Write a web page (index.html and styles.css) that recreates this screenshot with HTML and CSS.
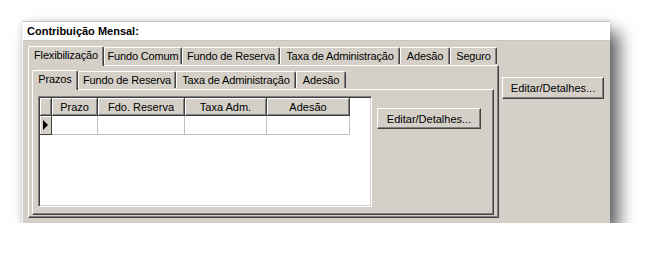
FILE: index.html
```html
<!DOCTYPE html>
<html lang="pt">
<head>
  <meta charset="UTF-8" />
  <title>Contribuição Mensal</title>
  <link rel="stylesheet" href="styles.css">
</head>
<body>

  <div class="window">
    <div class="title">Contribuição Mensal:</div>

    <div class="content">
      <!-- Abas principais -->
      <div class="tabs outer">
        <div class="tabbar">
          <span class="tab active t-flex">Flexibilização</span>
          <span class="tab t-comum">Fundo Comum</span>
          <span class="tab t-reserva">Fundo de Reserva</span>
          <span class="tab t-taxa">Taxa de Administração</span>
          <span class="tab t-adesao">Adesão</span>
          <span class="tab t-seguro">Seguro</span>
        </div>
        <div class="panel outer-panel">

          <!-- Abas internas -->
          <div class="tabs inner">
            <div class="tabbar">
              <span class="tab active t-prazos">Prazos</span>
              <span class="tab t-reserva">Fundo de Reserva</span>
              <span class="tab t-taxa">Taxa de Administração</span>
              <span class="tab t-adesao">Adesão</span>
            </div>
            <div class="panel inner-panel">
              <div class="grid">
                <table>
                  <thead>
                    <tr>
                      <th class="ind"></th>
                      <th class="c-prazo">Prazo</th>
                      <th class="c-fdo">Fdo. Reserva</th>
                      <th class="c-taxa">Taxa Adm.</th>
                      <th class="c-ades">Adesão</th>
                    </tr>
                  </thead>
                  <tbody>
                    <tr>
                      <td class="ind"><span class="arrow"></span></td>
                      <td></td>
                      <td></td>
                      <td></td>
                      <td></td>
                    </tr>
                  </tbody>
                </table>
              </div>
              <button class="btn btn-inner">Editar/Detalhes...</button>
            </div>
          </div>

        </div>
      </div>

      <div class="side">
        <button class="btn btn-side">Editar/Detalhes...</button>
      </div>
    </div>
  </div>

</body>
</html>
```

FILE: styles.css
```css
body {
  margin: 0;
  background-color: #fff;
  font-family: "Liberation Sans", Arial, sans-serif;
  font-size: 11px;
  color: #000;
}

.window {
  margin: 21px 0 0 22px;
  width: 588px;
  height: 202px;
  background-color: #d4d0c8;
  border-top: 1px solid #c8c6c0;
  border-left: 1px solid #f4f3ef;
  box-sizing: border-box;
  box-shadow: 0 0 6px rgba(0,0,0,0.12), 9px 11px 16px rgba(0,0,0,0.62);
}

.title {
  height: 18px;
  line-height: 19px;
  padding-left: 4px;
  background-color: #fff;
  border-bottom: 1px solid #c8c6c0;
  font-weight: bold;
}

.content {
  display: flex;
  padding: 5px 0 0 5px;
}

/* Abas */
.tabbar {
  display: flex;
  align-items: flex-end;
  height: 19px;
}

.tab {
  box-sizing: border-box;
  height: 17px;
  line-height: 16px;
  margin-bottom: 1px;
  text-align: center;
  letter-spacing: -0.15px;
  background-color: #d4d0c8;
  border-top: 1px solid #fff;
  border-left: 1px solid #fff;
  border-right: 1px solid #404040;
  border-radius: 2px 2px 0 0;
  box-shadow: inset -1px 0 #808080;
  white-space: nowrap;
}

.tab.active {
  height: 20px;
  line-height: 17px;
  margin-bottom: -1px;
  position: relative;
  z-index: 1;
}

.t-flex { width: 76px; }
.t-comum { width: 78px; }
.t-reserva { width: 98px; }
.t-taxa { width: 120px; }
.t-adesao { width: 50px; }
.t-seguro { width: 47px; }
.t-prazos { width: 46px; }

.panel {
  box-sizing: border-box;
  border-top: 1px solid #fff;
  border-left: 1px solid #fff;
  border-right: 1px solid #404040;
  border-bottom: 1px solid #404040;
  box-shadow: inset -1px -1px #808080;
  background-color: #d4d0c8;
}

.outer-panel {
  width: 471px;
  height: 153px;
  padding: 4px 0 0 3px;
}

.inner-panel {
  width: 462px;
  height: 126px;
  display: flex;
  align-items: flex-start;
  padding: 6px 0 0 5px;
}

/* Grade */
.grid {
  width: 334px;
  height: 111px;
  box-sizing: border-box;
  background-color: #fff;
  border-top: 1px solid #808080;
  border-left: 1px solid #808080;
  border-right: 1px solid #fff;
  border-bottom: 1px solid #fff;
  box-shadow: inset 1px 1px #404040, inset -1px -1px #d4d0c8;
  padding: 1px 0 0 1px;
}

table {
  border-collapse: separate;
  border-spacing: 0;
  table-layout: fixed;
}

th, td {
  box-sizing: border-box;
  padding: 0;
  font-weight: normal;
  text-align: center;
}

th {
  height: 18px;
  background-color: #d4d0c8;
  border-right: 1px solid #404040;
  border-bottom: 1px solid #404040;
  box-shadow: inset 1px 1px #fff, inset -1px -1px #808080;
}

td {
  height: 19px;
  border-right: 1px solid #c0c0c0;
  border-bottom: 1px solid #c0c0c0;
}

.ind { width: 12px; }
.c-prazo { width: 46px; }
.c-fdo { width: 87px; }
.c-taxa { width: 82px; }
.c-ades { width: 83px; }

td.ind {
  background-color: #d4d0c8;
  border-right: 1px solid #404040;
  border-bottom: 1px solid #404040;
  box-shadow: inset 1px 1px #fff;
}

.arrow {
  display: block;
  width: 0;
  height: 0;
  margin-left: 3px;
  border-top: 5px solid transparent;
  border-bottom: 5px solid transparent;
  border-left: 5px solid #000;
}

/* Botões */
.btn {
  box-sizing: border-box;
  padding: 0;
  font-family: "Liberation Sans", Arial, sans-serif;
  font-size: 11px;
  color: #000;
  background-color: #d4d0c8;
  border: 1px solid;
  border-color: #fff #404040 #404040 #fff;
  box-shadow: inset -1px -1px #808080;
}

.btn-inner {
  width: 104px;
  height: 21px;
  margin: 12px 0 0 5px;
}

.side {
  padding: 31px 0 0 3px;
}

.btn-side {
  width: 102px;
  height: 22px;
}
```
